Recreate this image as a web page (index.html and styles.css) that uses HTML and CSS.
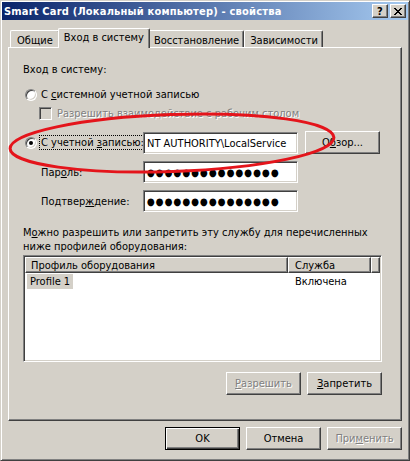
FILE: index.html
```html
<!DOCTYPE html>
<html>
  <head>
    <meta charset="UTF-8" />
    <title>Smart Card (Локальный компьютер) - свойства</title>
    <link rel="stylesheet" href="styles.css">
  </head>
  <body>
    <div class="screen">
      <div class="window">
        <div class="titlebar">
          <span class="title">Smart Card (Локальный компьютер) - свойства</span>
          <div class="caption-buttons">
            <span class="cap-btn help">?</span>
            <span class="cap-btn close">
              <svg width="8" height="7" viewBox="0 0 8 7"><path d="M0 0l7 7M1 0l7 7M7 0L0 7M8 0L1 7" stroke="#000" stroke-width="1" /></svg>
            </span>
          </div>
        </div>

        <div class="dialog">
          <div class="tabs">
            <div class="tab">Общие</div>
            <div class="tab active">Вход в систему</div>
            <div class="tab">Восстановление</div>
            <div class="tab">Зависимости</div>
          </div>

          <div class="page">
            <div class="heading">Вход в систему:</div>

            <div class="radio-row">
              <span class="radio"></span>
              <span class="label">С <u>с</u>истемной учетной записью</span>
            </div>

            <div class="check-row">
              <span class="checkbox"></span>
              <span class="label disabled">Разрешить взаимодействие с рабочим столом</span>
            </div>

            <div class="account">
              <div class="radio-row">
                <span class="radio checked"></span>
                <span class="label focused">С учетной <u>з</u>аписью:</span>
              </div>
              <div class="edit">NT AUTHORITY\LocalService</div>
              <button class="btn browse">О<u>б</u>зор...</button>

              <div class="field-label">Пар<u>о</u>ль:</div>
              <div class="edit password">●●●●●●●●●●●●●●●</div>
              <div></div>

              <div class="field-label">Подтвер<u>ж</u>дение:</div>
              <div class="edit password">●●●●●●●●●●●●●●●</div>
              <div></div>
            </div>

            <p class="note">М<u>о</u>жно разрешить или запретить эту службу для перечисленных ниже профилей оборудования:</p>

            <div class="list">
              <div class="list-header">
                <div class="col col-name">Профиль оборудования</div>
                <div class="col col-state">Служба</div>
                <div class="col col-fill"></div>
              </div>
              <div class="list-row">
                <div class="cell col-name"><span class="selected">Profile 1</span></div>
                <div class="cell col-state">Включена</div>
              </div>
            </div>

            <div class="list-buttons">
              <button class="btn disabled"><u>Р</u>азрешить</button>
              <button class="btn"><u>З</u>апретить</button>
            </div>
          </div>

          <div class="actions">
            <button class="btn default">OK</button>
            <button class="btn">Отмена</button>
            <button class="btn disabled">При<u>м</u>енить</button>
          </div>
        </div>
      </div>

      <!-- red ellipse drawn over the dialog -->
      <svg class="overlay" width="410" height="461" viewBox="0 0 410 461">
        <ellipse cx="172" cy="143" rx="162" ry="28.5" transform="rotate(-2 172 143)" fill="none" stroke="#e4141b" stroke-width="3" />
      </svg>
    </div>
  </body>
</html>
```

FILE: styles.css
```css
*,
*::after,
*::before {
  box-sizing: border-box;
}
body {
  margin: 0;
  font-family: 'DejaVu Sans Condensed', 'DejaVu Sans', 'Liberation Sans', sans-serif;
  font-size: 11px;
  line-height: 13px;
  color: #000;
  background-color: #d4d0c8;
}
u {
  text-decoration: underline;
  text-underline-offset: 1px;
}
.screen {
  position: relative;
  width: 410px;
  height: 461px;
}
/* классическое окно */
.window {
  display: flex;
  flex-direction: column;
  width: 410px;
  height: 461px;
  padding: 1px;
  background-color: #d4d0c8;
  border: 1px solid;
  border-color: #d4d0c8 #404040 #404040 #d4d0c8;
  box-shadow: inset 1px 1px #fff, inset -1px -1px #808080;
}
.titlebar {
  display: flex;
  align-items: center;
  height: 18px;
  padding: 0 2px 0 2px;
  color: #fff;
  font-weight: bold;
  letter-spacing: 0.2px;
  background: linear-gradient(to right, #0a246a, #a6caf0);
}
.title {
  flex: 1;
  white-space: nowrap;
}
.caption-buttons {
  display: flex;
  gap: 2px;
}
.cap-btn {
  display: flex;
  align-items: center;
  justify-content: center;
  width: 16px;
  height: 14px;
  color: #000;
  font-size: 11px;
  background-color: #d4d0c8;
  border: 1px solid;
  border-color: #fff #404040 #404040 #fff;
  box-shadow: inset -1px -1px #808080;
}
.dialog {
  flex: 1;
  display: flex;
  flex-direction: column;
  padding: 8px 6px 0 6px;
}
/* вкладки */
.tabs {
  display: flex;
  align-items: flex-end;
  height: 19px;
  padding-left: 2px;
}
.tab {
  height: 17px;
  padding: 3px 4px 0 5px;
  white-space: nowrap;
  background-color: #d4d0c8;
  border: 1px solid #fff;
  border-right-color: #404040;
  border-bottom: none;
  border-radius: 2px 2px 0 0;
  box-shadow: inset -1px 0 #808080;
}
.tab:first-child {
  padding: 3px 6px 0 6px;
}
.tab.active {
  position: relative;
  z-index: 1;
  height: 20px;
  margin: 0 -2px -1px;
  padding: 2px 5px 0 5px;
}
.page {
  display: flex;
  flex-direction: column;
  height: 374px;
  padding: 15px 19px 0 14px;
  border: 1px solid;
  border-color: #fff #404040 #404040 #fff;
  box-shadow: inset -1px -1px #808080;
}
.heading {
  height: 13px;
}
.radio-row {
  display: flex;
  align-items: center;
  height: 13px;
  margin-top: 12px;
}
.radio {
  position: relative;
  flex-shrink: 0;
  width: 12px;
  height: 12px;
  margin-left: 2px;
  background-color: #fff;
  border: 1px solid;
  border-color: #808080 #fff #fff #808080;
  border-radius: 50%;
  box-shadow: inset 1px 1px #404040, inset -1px -1px #d4d0c8;
}
.radio.checked::after {
  content: '';
  position: absolute;
  top: 3px;
  left: 3px;
  width: 4px;
  height: 4px;
  background-color: #000;
  border-radius: 50%;
}
.label {
  margin-left: 2px;
  padding: 0 1px;
  white-space: nowrap;
  border: 1px solid transparent;
}
.label.focused {
  border: 1px dotted #000;
}
.disabled,
.btn.disabled {
  color: #808080;
  text-shadow: 1px 1px #fff;
}
.check-row {
  display: flex;
  align-items: center;
  height: 13px;
  margin-top: 6px;
}
.checkbox {
  flex-shrink: 0;
  width: 13px;
  height: 13px;
  margin-left: 16px;
  background-color: #d4d0c8;
  border: 1px solid;
  border-color: #808080 #fff #fff #808080;
  box-shadow: inset 1px 1px #404040, inset -1px -1px #d4d0c8;
}
.check-row .label {
  margin-left: 3px;
}
/* учетная запись и пароль */
.account {
  display: grid;
  grid-template-columns: 120px 155px auto;
  grid-template-rows: 23px 22px 22px;
  row-gap: 7px;
  align-items: center;
  margin-top: 11px;
}
.account .radio-row {
  margin-top: 0;
}
.field-label {
  padding-left: 18px;
}
.edit {
  height: 22px;
  padding: 4px 3px 0;
  overflow: hidden;
  white-space: nowrap;
  background-color: #fff;
  border: 1px solid;
  border-color: #808080 #fff #fff #808080;
  box-shadow: inset 1px 1px #404040, inset -1px -1px #d4d0c8;
}
.edit.password {
  padding-top: 4px;
  letter-spacing: 1px;
  font-size: 10px;
}
.btn {
  width: 75px;
  height: 23px;
  padding: 0;
  font: inherit;
  color: #000;
  background-color: #d4d0c8;
  border: 1px solid;
  border-color: #fff #404040 #404040 #fff;
  box-shadow: inset -1px -1px #808080, inset 1px 1px #d4d0c8;
}
.btn.default {
  border-color: #000;
  box-shadow: inset 1px 1px #fff, inset -1px -1px #404040, inset -2px -2px #808080;
}
.browse {
  margin-left: 7px;
}
.note {
  margin: 14px 0 0;
  line-height: 14px;
}
/* список профилей */
.list {
  height: 107px;
  margin-top: 1px;
  padding: 1px;
  background-color: #fff;
  border: 1px solid;
  border-color: #808080 #fff #fff #808080;
  box-shadow: inset 1px 1px #404040, inset -1px -1px #d4d0c8;
}
.list-header {
  display: flex;
  height: 16px;
}
.col {
  padding: 1px 0 0 5px;
  background-color: #d4d0c8;
  border: 1px solid;
  border-color: #fff #404040 #404040 #fff;
  box-shadow: inset -1px -1px #808080;
}
.col-name {
  width: 263px;
}
.col-state {
  width: 83px;
  padding-left: 6px;
}
.col-fill {
  flex: 1;
}
.list-row {
  display: flex;
  height: 16px;
  padding-top: 2px;
}
.cell.col-state {
  padding-left: 7px;
}
.selected {
  margin-left: 2px;
  padding: 1px 3px 1px 3px;
  background-color: #d4d0c8;
}
.list-buttons {
  display: flex;
  justify-content: flex-end;
  gap: 6px;
  margin-top: 10px;
}
.actions {
  display: flex;
  justify-content: flex-end;
  gap: 6px;
  margin-top: 6px;
}
.overlay {
  position: absolute;
  top: 0;
  left: 0;
  pointer-events: none;
}
```
